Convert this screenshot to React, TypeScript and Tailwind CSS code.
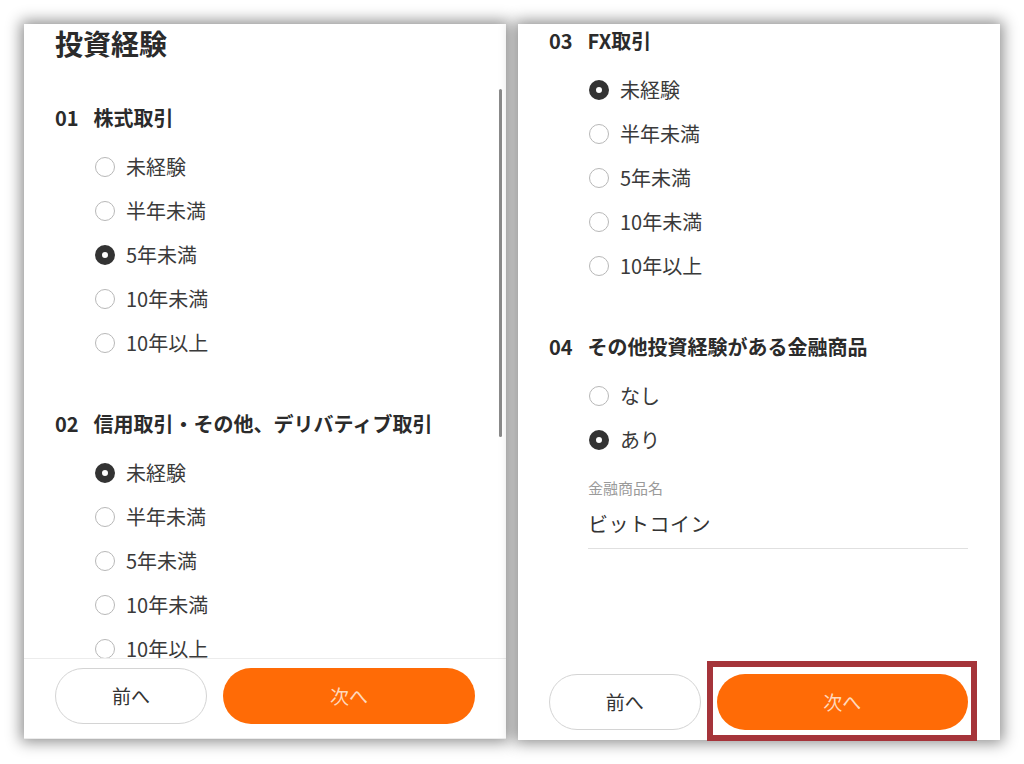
import React from 'react';

const font = { fontFamily: '"Noto Sans CJK JP", "Noto Sans", sans-serif' };

type Section = { no: string; title: string; options: string[]; checked: number };

const leftSections: Section[] = [
  { no: '01', title: '株式取引', options: ['未経験', '半年未満', '5年未満', '10年未満', '10年以上'], checked: 2 },
  { no: '02', title: '信用取引・その他、デリバティブ取引', options: ['未経験', '半年未満', '5年未満', '10年未満', '10年以上'], checked: 0 },
];

function Radio({ label, checked }: { label: string; checked: boolean }) {
  return (
    <div className="flex items-center h-[44px] pl-[40px]">
      <span
        className={
          checked
            ? 'w-[20px] h-[20px] rounded-full border-[7px] border-[#333333] bg-white'
            : 'w-[20px] h-[20px] rounded-full border-[1.5px] border-[#b8b8b8] bg-white'
        }
      />
      <span className="ml-[11px] text-[20px] leading-[28px] text-[#3a3a3a]">{label}</span>
    </div>
  );
}

function Heading({ no, title }: { no: string; title: string }) {
  return (
    <div className="flex items-center gap-[15px] text-[20px] leading-[28px] font-bold text-[#2b2b2b]">
      <span>{no}</span>
      <span>{title}</span>
    </div>
  );
}

function Options({ s }: { s: Section }) {
  return (
    <div className="mt-[13px]">
      {s.options.map((o, i) => (
        <Radio key={o} label={o} checked={i === s.checked} />
      ))}
    </div>
  );
}

function Buttons() {
  return (
    <div className="flex gap-[16px]">
      <button className="w-[152px] h-[56px] rounded-full border border-[#d4d4d4] bg-white text-[19px] text-[#333333]">
        前へ
      </button>
      <button className="w-[252px] h-[56px] rounded-full bg-[#ff6b06] text-[19px] text-[#ffd9bd]">
        次へ
      </button>
    </div>
  );
}

export default function App() {
  return (
    <div className="w-[1024px] h-[764px] bg-white overflow-hidden flex gap-[12px] pt-[24px] pl-[24px]" style={font}>
      {/* left screen */}
      <div className="relative w-[482px] h-[715px] bg-white flex flex-col shadow-[0_0_14px_3px_rgba(0,0,0,0.45)]">
        <div className="flex-1 overflow-hidden pl-[31px] pr-[31px]">
          <h1 className="mt-[1px] text-[28px] leading-[36px] font-bold text-[#2b2b2b]">投資経験</h1>
          <div className="mt-[43px]">
            <Heading no={leftSections[0].no} title={leftSections[0].title} />
            <Options s={leftSections[0]} />
          </div>
          <div className="mt-[45px]">
            <Heading no={leftSections[1].no} title={leftSections[1].title} />
            <Options s={leftSections[1]} />
          </div>
        </div>
        <div className="border-t border-b border-[#ececec] pt-[9px] pb-[14px] pl-[31px]">
          <Buttons />
        </div>
        {/* scrollbar */}
        <div className="absolute left-[475px] top-[65px] w-[3px] h-[348px] rounded-full bg-[#8a8a8a]" />
      </div>

      {/* right screen */}
      <div className="relative w-[482px] h-[716px] bg-white flex flex-col pl-[31px] pr-[32px] shadow-[0_0_14px_3px_rgba(0,0,0,0.45)]">
        <div className="mt-[3px]">
          <Heading no="03" title="FX取引" />
          <Options s={{ no: '03', title: 'FX取引', options: ['未経験', '半年未満', '5年未満', '10年未満', '10年以上'], checked: 0 }} />
        </div>
        <div className="mt-[45px]">
          <Heading no="04" title="その他投資経験がある金融商品" />
          <Options s={{ no: '04', title: '', options: ['なし', 'あり'], checked: 1 }} />
          <div className="ml-[39px] mt-[16px] border-b border-[#e0e0e0] pb-[10px]">
            <div className="text-[15px] leading-[20px] text-[#9a9a9a]">金融商品名</div>
            <div className="mt-[12px] text-[20px] leading-[28px] tracking-[0.5px] text-[#333333]">ビットコイン</div>
          </div>
        </div>
        <div className="mt-auto pb-[10px]">
          <Buttons />
        </div>
        {/* highlight frame */}
        <div className="absolute left-[189px] top-[637px] w-[270px] h-[80px] border-[6px] border-[#a5343a]" />
      </div>
    </div>
  );
}
